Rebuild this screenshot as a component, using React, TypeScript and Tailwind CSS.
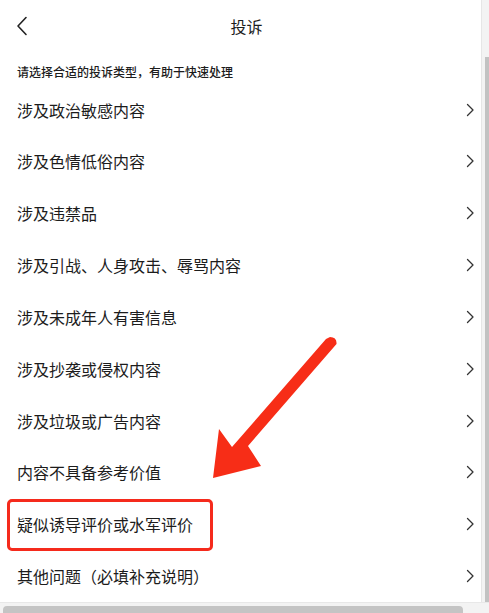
const items = [
  "涉及政治敏感内容",
  "涉及色情低俗内容",
  "涉及违禁品",
  "涉及引战、人身攻击、辱骂内容",
  "涉及未成年人有害信息",
  "涉及抄袭或侵权内容",
  "涉及垃圾或广告内容",
  "内容不具备参考价值",
  "疑似诱导评价或水军评价",
  "其他问题（必填补充说明）",
];

const Chevron = () => (
  <svg width="10" height="14" viewBox="0 0 10 14" fill="none">
    <path d="M2.5 1.5 L8 7 L2.5 12.5" stroke="#333" strokeWidth="1.3" strokeLinecap="round" strokeLinejoin="round" />
  </svg>
);

export default function App() {
  return (
    <div
      className="w-[489px] h-[613px] overflow-hidden bg-white flex flex-col relative"
      style={{ fontFamily: '"Noto Sans CJK SC", "Noto Sans", sans-serif' }}
    >
      <div className="flex flex-1 min-h-0">
        <div className="w-[481px] flex flex-col text-[#1c1c1c]">
          {/* header */}
          <div className="h-[52px] relative flex items-center justify-center pl-3">
            <svg className="absolute left-[15px] top-[16px]" width="14" height="20" viewBox="0 0 14 20" fill="none">
              <path d="M11 1.5 L3 10 L11 18.5" stroke="#222" strokeWidth="1.6" strokeLinecap="round" strokeLinejoin="round" />
            </svg>
            <span className="text-[16px] leading-none">投诉</span>
          </div>
          <div className="h-8 pt-2 flex items-center px-[17px] text-[12px] font-medium">
            请选择合适的投诉类型，有助于快速处理
          </div>
          {items.map((t) => (
            <div key={t} className="h-[52px] flex items-center justify-between pl-[17px] pr-[6px]">
              <span className="text-[16px]">{t}</span>
              <Chevron />
            </div>
          ))}
        </div>
        {/* vertical scrollbar */}
        <div className="w-2 bg-[#f3f3f3] border-l border-[#e6e6e6] flex flex-col pt-[57px]">
          <div className="flex-1 ml-[3px] bg-[#c2c2c2]" />
        </div>
      </div>
      {/* horizontal scrollbar */}
      <div className="h-[11px] border-t border-[#e8e8e8] bg-[#f3f3f3] flex items-end pl-[3px]">
        <div className="w-[460px] h-[7px] bg-[#c4c4c4] rounded-t-sm" />
      </div>

      {/* red highlight box */}
      <div className="absolute left-[7px] top-[499px] w-[206px] h-[52px] border-[3px] border-[#f52a1c] rounded-[5px]" />
      {/* red arrow */}
      <svg className="absolute left-0 top-0 pointer-events-none" width="489" height="613" viewBox="0 0 489 613">
        <path
          d="M330 337 Q337 337 336.5 344 L248 446 L261 466 L213 478 L219 429 L232 447 L326 339 Z"
          fill="#f72d17"
        />
      </svg>
    </div>
  );
}
